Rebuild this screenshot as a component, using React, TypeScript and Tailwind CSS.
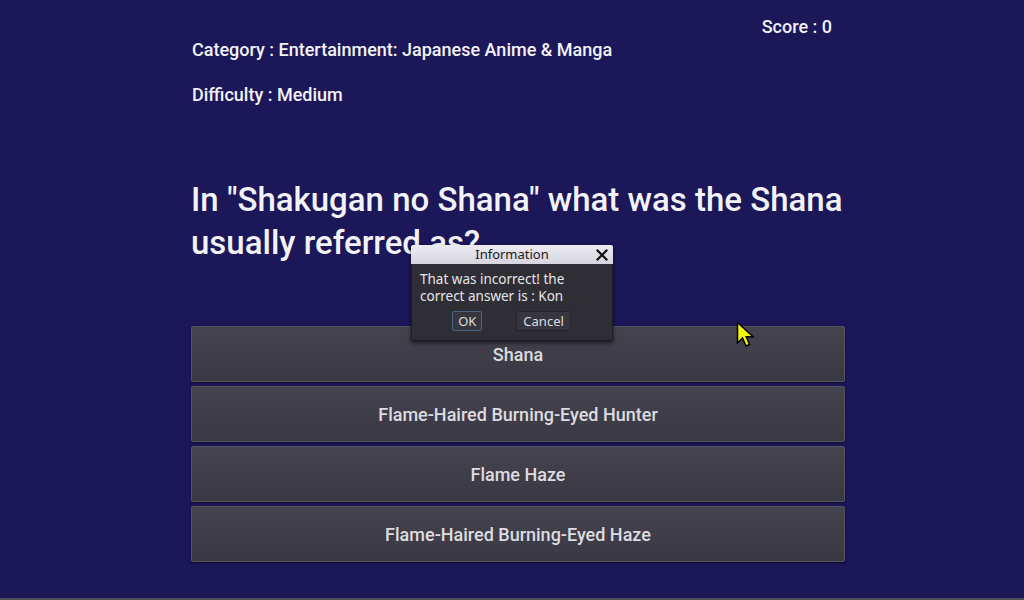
import React from "react";

const answers = [
  "Shana",
  "Flame-Haired Burning-Eyed Hunter",
  "Flame Haze",
  "Flame-Haired Burning-Eyed Haze",
];

export default function App() {
  return (
    <div
      className="relative w-[1024px] h-[600px] overflow-hidden bg-[#1b1758] text-[#f2f2f7]"
      style={{ fontFamily: "Roboto, 'Noto Sans', sans-serif" }}
    >
      <div className="flex flex-col h-[598px] pl-[191px] w-[845px]">
        <div className="flex justify-end pr-[13px] pt-[15px] h-[38px]">
          <span className="text-[18px] leading-[24px] font-medium">Score : 0</span>
        </div>
        <div className="pl-[1px] text-[18px] leading-[24px] font-medium">
          Category : Entertainment: Japanese Anime &amp; Manga
        </div>
        <div className="pl-[1px] mt-[21px] text-[18px] leading-[24px] font-medium">
          Difficulty : Medium
        </div>
        <div className="mt-[71px] text-[33px] leading-[43px] font-medium">
          In "Shakugan no Shana" what was the Shana usually referred as?
        </div>
        <div className="mt-[62px] flex flex-col gap-[4px]">
          {answers.map((a) => (
            <div
              key={a}
              className="h-[56px] shrink-0 flex items-center justify-center rounded-[2px] border border-[#55535e] bg-gradient-to-b from-[#45434d] to-[#3a3842] text-[18px] font-medium text-[#dcdce0] shadow-[0_1px_2px_rgba(0,0,0,0.5)]"
            >
              {a}
            </div>
          ))}
        </div>
      </div>
      <div className="h-[2px] bg-[#4e4d56]" />

      {/* Dialog */}
      <div
        className="absolute left-[411px] top-[245px] w-[202px] h-[96px] flex flex-col shadow-[0_2px_4px_rgba(0,0,0,0.6)]"
        style={{ fontFamily: "'Noto Sans', 'DejaVu Sans', sans-serif" }}
      >
        <div className="relative h-[19px] bg-gradient-to-b from-[#eceaf2] to-[#d6d4de] flex items-center justify-center text-[13px] text-[#1a1a1a] rounded-t-[2px]">
          <span className="leading-[19px]">Information</span>
          <svg className="absolute right-[5px] top-[4px]" width="12" height="12" viewBox="0 0 12 12">
            <path d="M1.5 1.5 L10.5 10.5 M10.5 1.5 L1.5 10.5" stroke="#111" strokeWidth="2.2" strokeLinecap="square" />
          </svg>
        </div>
        <div className="flex-1 bg-[#2f2e35] border border-t-0 border-[#1f1e24] px-[8px] pt-[7px] text-[13.5px] leading-[17px] text-[#e6e6ea]">
          <div>That was incorrect! the</div>
          <div>correct answer is : Kon</div>
          <div className="flex justify-center gap-[34px] mt-[6px] pr-[1px]">
            <div className="h-[20px] px-[5px] flex items-center rounded-[2px] border border-[#4a6584] bg-[#37363e] text-[13px] text-[#dcdce0]">
              OK
            </div>
            <div className="h-[20px] px-[6px] flex items-center rounded-[2px] border border-[#26252b] bg-[#37363e] text-[13px] text-[#dcdce0]">
              Cancel
            </div>
          </div>
        </div>
      </div>

      {/* Cursor */}
      <svg className="absolute left-[736px] top-[321px]" width="22" height="32" viewBox="0 0 22 32">
        <path
          d="M1.5 1.5 L1.5 22 L6.5 17 L10 25 L13.5 23.5 L10.2 15.8 L17 15.8 Z"
          fill="#f5f50a"
          stroke="#000"
          strokeWidth="1.5"
          strokeLinejoin="miter"
        />
      </svg>
    </div>
  );
}
